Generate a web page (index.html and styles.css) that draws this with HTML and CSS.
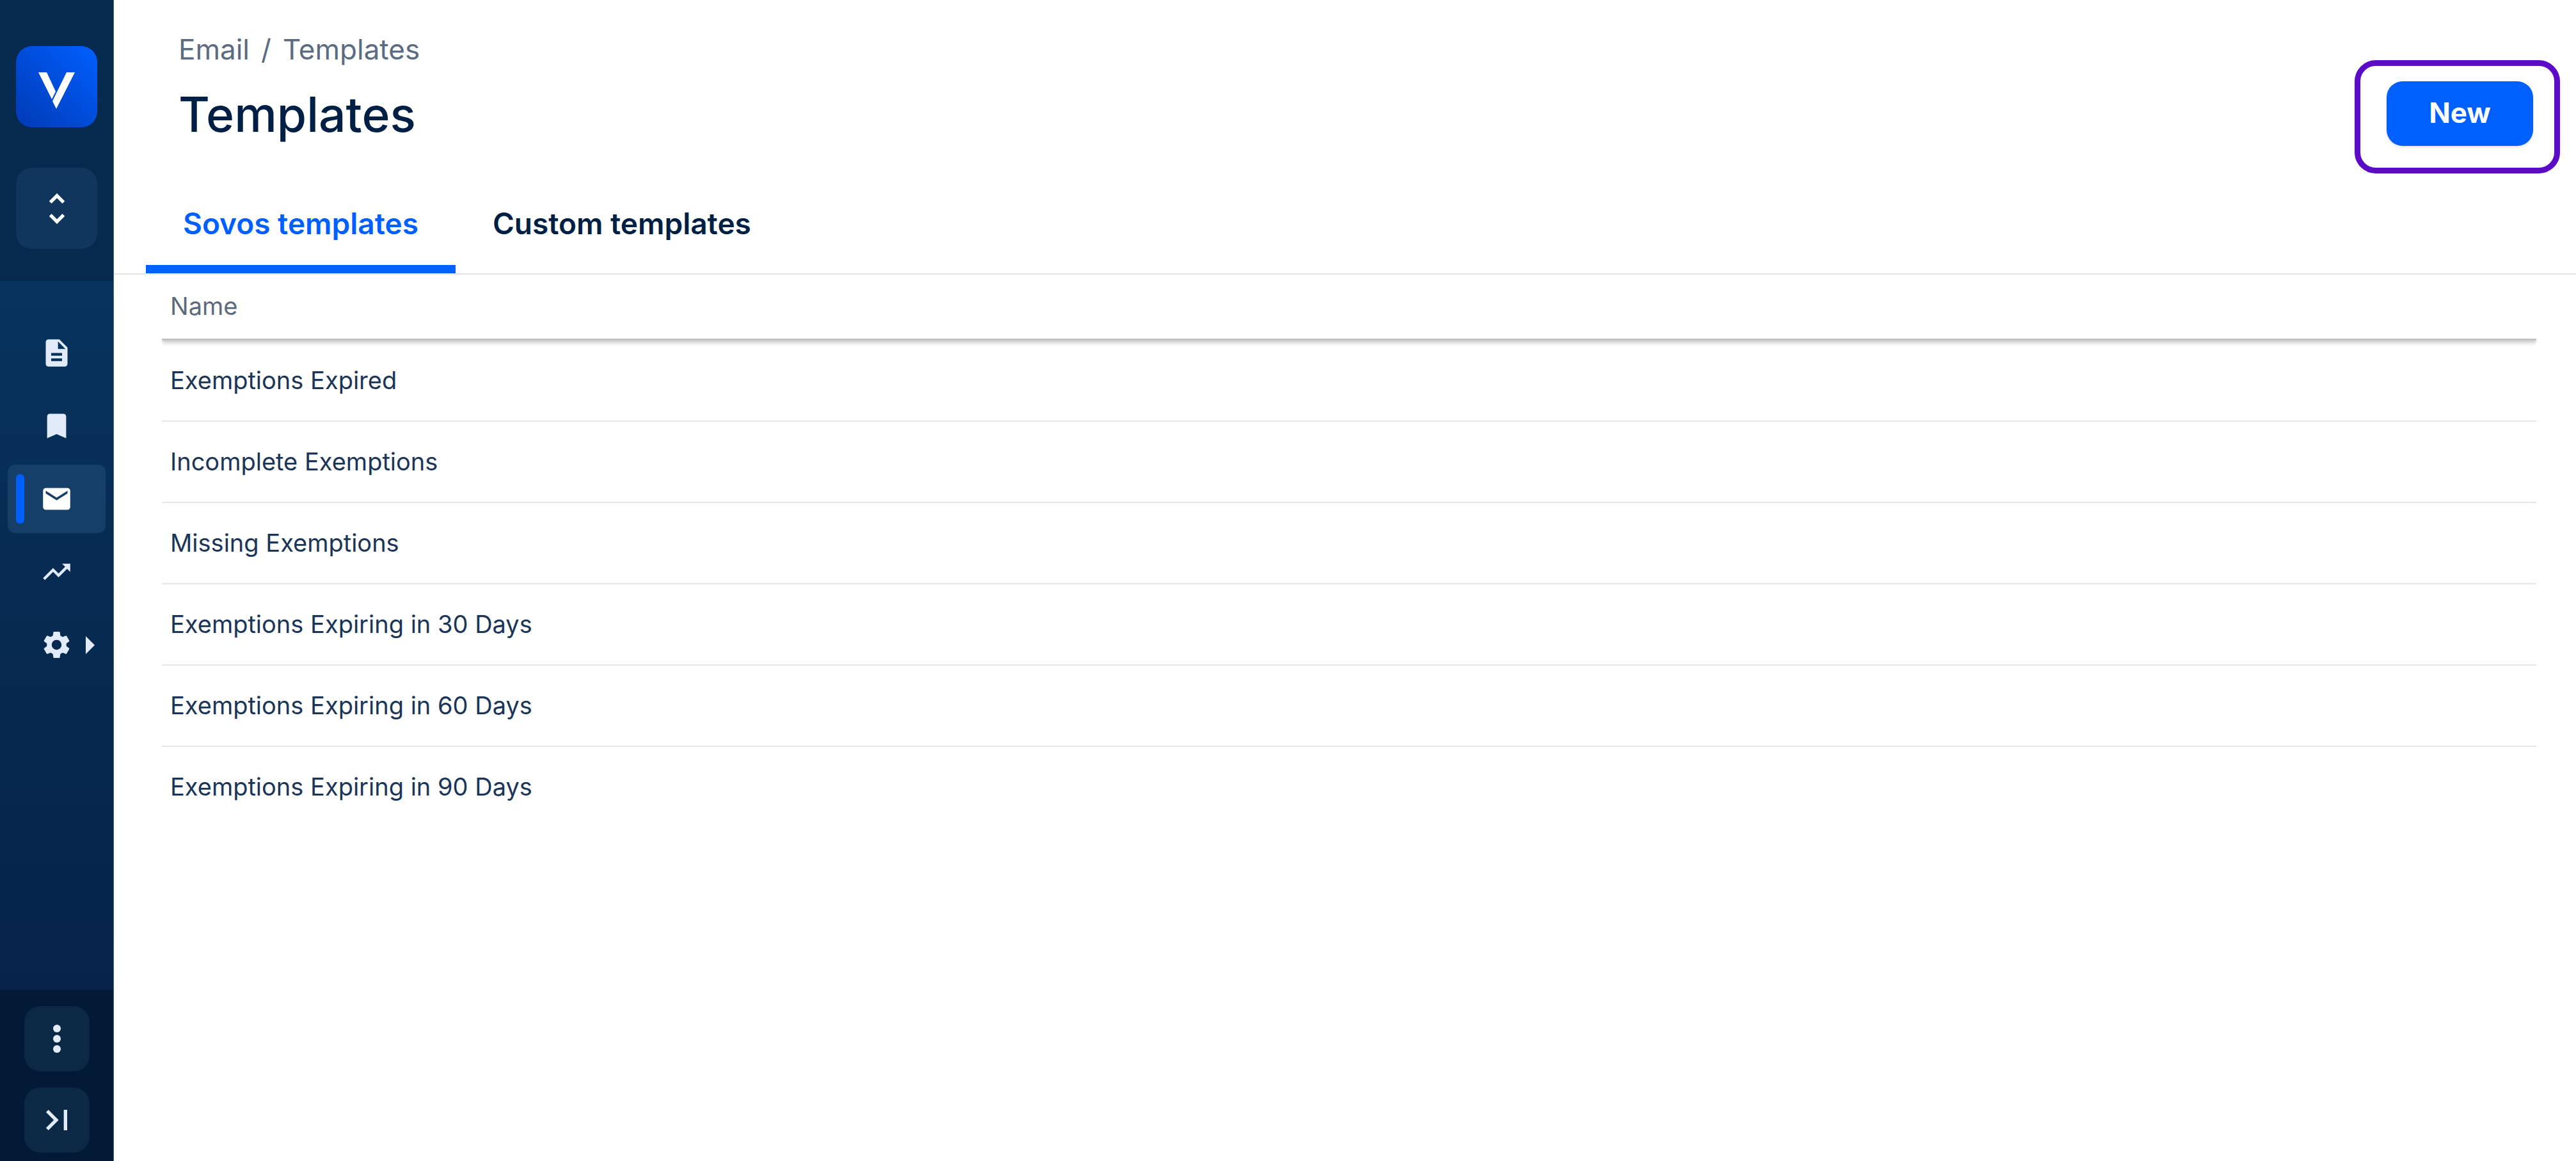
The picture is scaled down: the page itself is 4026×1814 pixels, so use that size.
FILE: index.html
```
<!DOCTYPE html>
<html lang="en">
<head>
    <meta charset="UTF-8">
    <meta name="viewport" content="width=device-width, initial-scale=1.0">
    <title>Templates</title>
    <link rel="stylesheet" href="styles.css">
</head>
<body>
    <aside class="sidebar">
        <div class="sidebar-top">
            <a class="logo" href="#" aria-label="Home">
                <svg viewBox="0 0 127 127">
                    <path d="M35 41H48L62 71L56 83Z M79 41H92L63 98L57 86Z"/>
                </svg>
            </a>
            <button class="switcher" aria-label="Switch account">
                <svg class="icon-large" viewBox="0 0 24 24"><path d="M12 5.83L15.17 9l1.41-1.41L12 3 7.41 7.59 8.83 9 12 5.83zm0 12.34L8.83 15l-1.41 1.41L12 21l4.59-4.59L15.17 15 12 18.17z"/></svg>
            </button>
        </div>

        <nav class="nav">
            <a class="nav-item" href="#" aria-label="Documents">
                <svg class="icon" viewBox="0 0 24 24"><path d="M14 2H6c-1.1 0-1.99.9-1.99 2L4 20c0 1.1.89 2 1.99 2H18c1.1 0 2-.9 2-2V8l-6-6zm2 16H8v-2h8v2zm0-4H8v-2h8v2zm-3-5V3.5L18.5 9H13z"/></svg>
            </a>
            <a class="nav-item" href="#" aria-label="Bookmarks">
                <svg class="icon" viewBox="0 0 24 24"><path d="M17 3H7c-1.1 0-1.99.9-1.99 2L5 21l7-3 7 3V5c0-1.1-.9-2-2-2z"/></svg>
            </a>
            <a class="nav-item active" href="#" aria-label="Email">
                <svg class="icon" viewBox="0 0 24 24"><path d="M20 4H4c-1.1 0-1.99.9-1.99 2L2 18c0 1.1.9 2 2 2h16c1.1 0 2-.9 2-2V6c0-1.1-.9-2-2-2zm0 4l-8 5-8-5V6l8 5 8-5v2z"/></svg>
            </a>
            <a class="nav-item" href="#" aria-label="Reports">
                <svg class="icon" viewBox="0 0 24 24"><path d="M16 6l2.29 2.29-4.88 4.88-4-4L2 16.59 3.41 18l6-6 4 4 6.3-6.29L22 12V6z"/></svg>
            </a>
            <a class="nav-item" href="#" aria-label="Settings">
                <svg class="icon" viewBox="0 0 24 24"><path d="M19.14 12.94c.04-.3.06-.61.06-.94 0-.32-.02-.64-.07-.94l2.03-1.58c.18-.14.23-.41.12-.61l-1.92-3.32c-.12-.22-.37-.29-.59-.22l-2.39.96c-.5-.38-1.03-.7-1.62-.94l-.36-2.54c-.04-.24-.24-.41-.48-.41h-3.84c-.24 0-.43.17-.47.41l-.36 2.54c-.59.24-1.13.57-1.62.94l-2.39-.96c-.22-.08-.47 0-.59.22L2.74 8.87c-.12.21-.08.47.12.61l2.03 1.58c-.05.3-.09.63-.09.94s.02.64.07.94l-2.03 1.58c-.18.14-.23.41-.12.61l1.92 3.32c.12.22.37.29.59.22l2.39-.96c.5.38 1.03.7 1.62.94l.36 2.54c.05.24.24.41.48.41h3.84c.24 0 .44-.17.47-.41l.36-2.54c.59-.24 1.13-.56 1.62-.94l2.39.96c.22.08.47 0 .59-.22l1.92-3.32c.12-.22.07-.47-.12-.61l-2.01-1.58zM12 15.6c-1.98 0-3.6-1.62-3.6-3.6s1.62-3.6 3.6-3.6 3.6 1.62 3.6 3.6-1.62 3.6-3.6 3.6z"/></svg>
                <svg class="expand" viewBox="0 0 14 28"><path d="M0 0L14 14L0 28Z"/></svg>
            </a>
        </nav>

        <div class="sidebar-bottom">
            <button class="tool" aria-label="More">
                <svg class="icon-large" viewBox="0 0 64 64"><circle cx="32" cy="16" r="6"/><circle cx="32" cy="32" r="6"/><circle cx="32" cy="48" r="6"/></svg>
            </button>
            <button class="tool" aria-label="Expand menu">
                <svg class="icon-large" viewBox="0 0 24 24"><path d="M5.59 7.41L10.18 12l-4.59 4.59L7 18l6-6-6-6zM16 6h2v12h-2z"/></svg>
            </button>
        </div>
    </aside>

    <main class="main">
        <header class="header">
            <div class="heading">
                <nav class="breadcrumbs" aria-label="Breadcrumb">
                    <a href="#">Email</a>
                    <span>/</span>
                    <a href="#">Templates</a>
                </nav>
                <h1>Templates</h1>
            </div>
            <div class="highlight">
                <button class="new-button">New</button>
            </div>
        </header>

        <div class="tabs" role="tablist">
            <button class="tab active" role="tab" aria-selected="true">Sovos templates</button>
            <button class="tab" role="tab" aria-selected="false">Custom templates</button>
        </div>

        <div class="table-wrap">
            <table>
                <thead>
                    <tr><th>Name</th></tr>
                </thead>
                <tbody>
                    <tr><td>Exemptions Expired</td></tr>
                    <tr><td>Incomplete Exemptions</td></tr>
                    <tr><td>Missing Exemptions</td></tr>
                    <tr><td>Exemptions Expiring in 30 Days</td></tr>
                    <tr><td>Exemptions Expiring in 60 Days</td></tr>
                    <tr><td>Exemptions Expiring in 90 Days</td></tr>
                </tbody>
            </table>
        </div>
    </main>
</body>
</html>
```
FILE: styles.css
```
* {
    box-sizing: border-box;
}

body {
    margin: 0;
    display: flex;
    min-height: 100vh;
    background-color: #ffffff;
    color: #001f45;
    font-family: Inter, "Liberation Sans", sans-serif;
}

button {
    border: none;
    padding: 0;
    font-family: inherit;
    cursor: pointer;
}

a {
    color: inherit;
    text-decoration: none;
}

svg {
    display: block;
    fill: currentColor;
}

/* Sidebar */
.sidebar {
    display: flex;
    flex-direction: column;
    flex-shrink: 0;
    width: 178px;
    border-right: 1px solid #44618a;
    background: linear-gradient(#07375f, #07335e 25%, #072b52 50%, #06224a 90%);
    color: #e2ebf9;
}

.sidebar-top {
    display: flex;
    flex-direction: column;
    align-items: center;
    gap: 63px;
    padding: 72px 0 50px;
    background-color: #062a4e;
}

.logo,
.switcher {
    width: 127px;
    height: 127px;
    border-radius: 25px;
    color: #ffffff;
}

.logo {
    background: linear-gradient(to top right, #003ab5, #0060ff);
}

.switcher {
    display: grid;
    place-items: center;
    background-color: #10365e;
}

.icon {
    width: 51px;
    height: 51px;
}

.icon-large {
    width: 64px;
    height: 64px;
}

.nav {
    flex: 1;
    display: flex;
    flex-direction: column;
    gap: 7px;
    padding: 59px 12px;
}

.nav-item {
    position: relative;
    display: flex;
    align-items: center;
    justify-content: center;
    height: 107px;
    border-radius: 12px;
}

.nav-item.active {
    background-color: #153f69;
    color: #ffffff;
}

.nav-item.active::before {
    content: "";
    position: absolute;
    left: 13px;
    width: 13px;
    height: 77px;
    border-radius: 6px;
    background-color: #0060ff;
}

.expand {
    position: absolute;
    right: 17px;
    width: 14px;
    height: 28px;
}

.sidebar-bottom {
    display: flex;
    flex-direction: column;
    align-items: center;
    gap: 25px;
    padding: 25px 0 13px;
    background-color: #021a36;
}

.tool {
    display: grid;
    place-items: center;
    width: 102px;
    height: 102px;
    border-radius: 25px;
    background-color: #0b2845;
    color: #e2ebf9;
}

/* Page header */
.main {
    flex: 1;
    min-width: 0;
}

.header {
    display: flex;
    justify-content: space-between;
    align-items: flex-start;
    padding: 50px 25px 0 101px;
}

.breadcrumbs {
    display: flex;
    gap: 18px;
    font-size: 44px;
    line-height: 54px;
    color: #5b6b82;
}

h1 {
    margin: 29px 0 0;
    font-size: 75px;
    line-height: 92px;
    font-weight: 500;
}

/* Purple frame around the call to action */
.highlight {
    margin-top: 44px;
    padding: 24px 33px 34px 41px;
    border: 9px solid #5c0bc7;
    border-radius: 33px;
}

.new-button {
    display: block;
    width: 229px;
    height: 101px;
    padding-bottom: 4px;
    border-radius: 25px;
    background-color: #0060ff;
    box-shadow: 0 2px 4px rgba(0, 0, 0, 0.12);
    color: #ffffff;
    font-size: 44px;
    font-weight: 700;
}

/* Tabs */
.tabs {
    display: flex;
    padding-left: 50px;
    border-bottom: 2px solid #e5e5e5;
}

.tab {
    height: 156px;
    padding: 0 58px;
    border-top: 13px solid transparent;
    border-bottom: 13px solid transparent;
    background: none;
    color: #001f45;
    font-size: 46px;
    font-weight: 600;
}

.tab.active {
    border-bottom-color: #0060ff;
    color: #0060ff;
}

/* Templates table */
.table-wrap {
    padding: 0 62px 0 75px;
}

table {
    width: 100%;
    border-collapse: separate;
    border-spacing: 0;
    font-size: 38px;
    line-height: 46px;
}

thead {
    box-shadow: 0 4px 6px rgba(0, 0, 0, 0.2);
    clip-path: inset(0 0 -12px 0);
}

th,
td {
    padding: 0 13px 2px;
    text-align: left;
    font-weight: 400;
}

th {
    height: 103px;
    border-bottom: 3px solid #c2c2c2;
    color: #5d6a7d;
}

td {
    height: 127px;
    border-bottom: 2px solid #e6e6e6;
    color: #1a3557;
}

tbody tr:last-child td {
    border-bottom-color: transparent;
}
```
